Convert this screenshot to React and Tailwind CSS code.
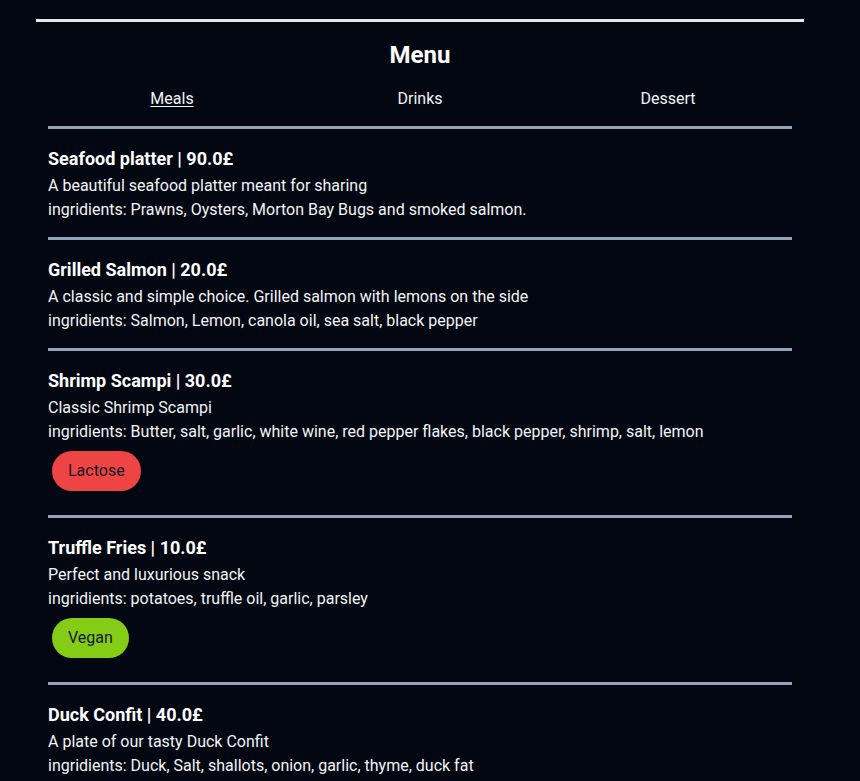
const items = [
  {
    name: 'Seafood platter',
    price: '90.0',
    description: 'A beautiful seafood platter meant for sharing',
    ingredients: 'Prawns, Oysters, Morton Bay Bugs and smoked salmon.',
    tags: [],
  },
  {
    name: 'Grilled Salmon',
    price: '20.0',
    description: 'A classic and simple choice. Grilled salmon with lemons on the side',
    ingredients: 'Salmon, Lemon, canola oil, sea salt, black pepper',
    tags: [],
  },
  {
    name: 'Shrimp Scampi',
    price: '30.0',
    description: 'Classic Shrimp Scampi',
    ingredients: 'Butter, salt, garlic, white wine, red pepper flakes, black pepper, shrimp, salt, lemon',
    tags: ['Lactose'],
  },
  {
    name: 'Truffle Fries',
    price: '10.0',
    description: 'Perfect and luxurious snack',
    ingredients: 'potatoes, truffle oil, garlic, parsley',
    tags: ['Vegan'],
  },
  {
    name: 'Duck Confit',
    price: '40.0',
    description: 'A plate of our tasty Duck Confit',
    ingredients: 'Duck, Salt, shallots, onion, garlic, thyme, duck fat',
    tags: [],
  },
];

function Tag({ label }) {
  const color = label === 'Vegan' ? 'bg-[#84cc16]' : 'bg-[#ef4444]';
  return (
    <span className={`${color} inline-block rounded-full px-4 py-2 leading-6 text-[#111827]`}>
      {label}
    </span>
  );
}

function MenuItem({ item }) {
  return (
    <div className="border-t-[3px] border-[#94a3b8] pb-[15px] pt-4">
      <div className="mb-px text-lg font-bold leading-7 text-white">
        {item.name} | {item.price}£
      </div>
      <div className="leading-6 text-gray-100">{item.description}</div>
      <div className="leading-6 text-gray-100">ingridients: {item.ingredients}</div>
      {item.tags.length > 0 && (
        <div className="flex gap-2 pb-[9px] pl-1 pt-[7px]">
          {item.tags.map((t) => (
            <Tag key={t} label={t} />
          ))}
        </div>
      )}
    </div>
  );
}

export default function App() {
  return (
    <div className="min-h-screen bg-[#030712] pt-[19px] font-['Roboto',sans-serif] text-base text-gray-100">
      <div className="ml-[36px] w-[768px] border-t-[3px] border-gray-200 px-3">
        <h1 className="pb-4 pt-[17px] text-center text-2xl font-bold leading-8 text-white">Menu</h1>
        <nav className="grid grid-cols-3 pb-[15px] text-center leading-6">
          <a className="cursor-pointer underline underline-offset-2">Meals</a>
          <a className="cursor-pointer">Drinks</a>
          <a className="cursor-pointer">Dessert</a>
        </nav>
        {items.map((item) => (
          <MenuItem key={item.name} item={item} />
        ))}
      </div>
    </div>
  );
}
